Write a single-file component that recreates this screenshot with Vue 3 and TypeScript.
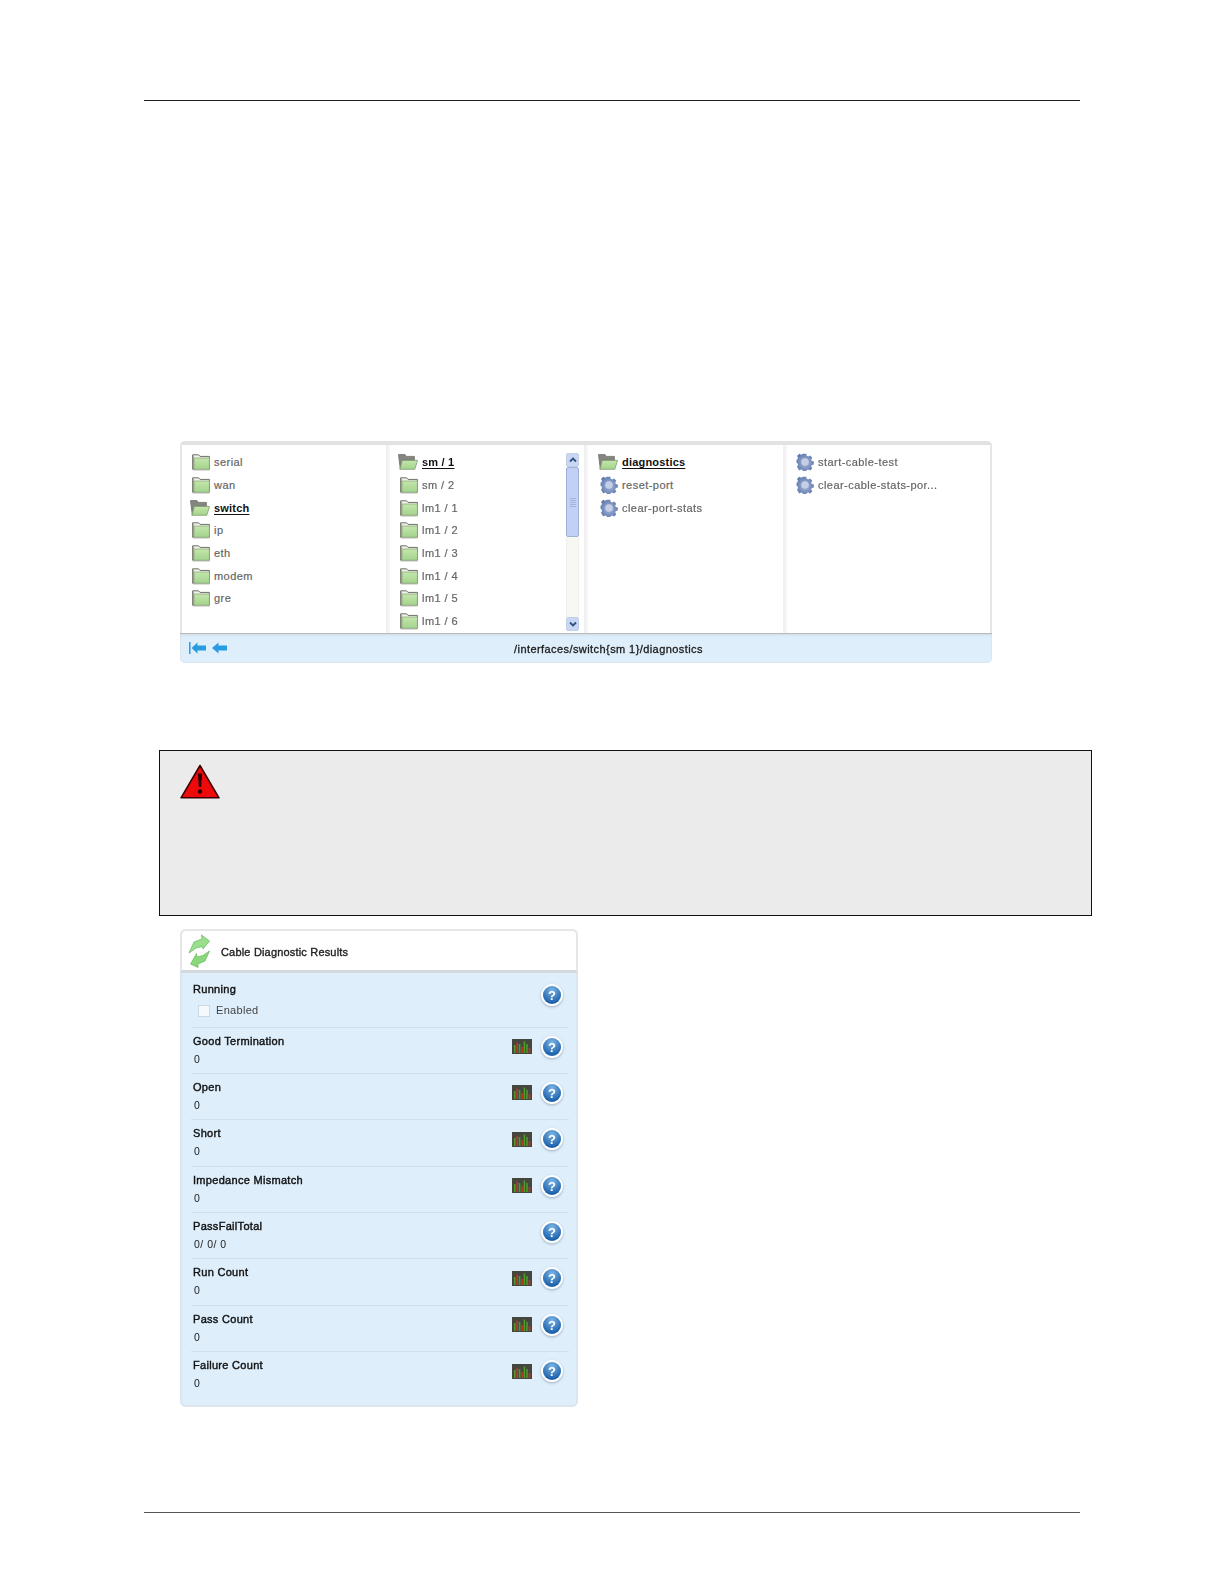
<script setup lang="ts">
interface Item { label: string; kind: 'folder' | 'open' | 'gear'; active?: boolean }
const f = (label: string): Item => ({ label, kind: 'folder' })
const o = (label: string): Item => ({ label, kind: 'open', active: true })
const g = (label: string): Item => ({ label, kind: 'gear' })
const columns: { cls: string; items: Item[] }[] = [
  { cls: 'c1', items: [f('serial'), f('wan'), o('switch'), f('ip'), f('eth'), f('modem'), f('gre')] },
  { cls: 'c2', items: [o('sm / 1'), f('sm / 2'), f('lm1 / 1'), f('lm1 / 2'), f('lm1 / 3'), f('lm1 / 4'), f('lm1 / 5'), f('lm1 / 6')] },
  { cls: 'c3', items: [o('diagnostics'), g('reset-port'), g('clear-port-stats')] },
  { cls: 'c4', items: [g('start-cable-test'), g('clear-cable-stats-por...')] }
]
const rows = [
  { label: 'Good Termination', value: '0', chart: true },
  { label: 'Open', value: '0', chart: true },
  { label: 'Short', value: '0', chart: true },
  { label: 'Impedance Mismatch', value: '0', chart: true },
  { label: 'PassFailTotal', value: '0/ 0/ 0', chart: false },
  { label: 'Run Count', value: '0', chart: true },
  { label: 'Pass Count', value: '0', chart: true },
  { label: 'Failure Count', value: '0', chart: true }
]
</script>

<template>
  <div class="page">
    <svg class="defs" aria-hidden="true">
      <defs>
        <linearGradient id="gf" x1="0" y1="0" x2="0" y2="1">
          <stop offset="0" stop-color="#c4e6ac" />
          <stop offset="1" stop-color="#a3d48c" />
        </linearGradient>
        <radialGradient id="gg" cx=".5" cy=".5" r=".55">
          <stop offset="0" stop-color="#aab9dc" />
          <stop offset="1" stop-color="#5f79ae" />
        </radialGradient>
        <symbol id="folder" viewBox="0 0 18 18">
          <path d="M.6 1.800h6l1.400 1.600h9.400v12.800H.6z" fill="#eef0ea" stroke="#6f7168" stroke-width="1" />
          <path d="M2.200 5h15.200v11.200H2.200z" fill="url(#gf)" stroke="#86a678" stroke-width=".7" />
          <path d="M.9 2.600v13.600" stroke="#85877a" stroke-width="1.600" />
          <path d="M1 17h16.600" stroke="#b9bdb2" stroke-width="1" />
        </symbol>
        <symbol id="open" viewBox="0 0 20 18">
          <path d="M.5 1.600h6.500l1.400 1.800h8v4H3.500l-1.200 8.800z" fill="#85867f" stroke="#6e6f69" stroke-width=".8" />
          <path d="M4.400 7.400h15.200l-2.800 8.900H1.900z" fill="url(#gf)" stroke="#7f9c72" stroke-width=".8" />
        </symbol>
        <symbol id="gear" viewBox="0 0 18 18">
          <path d="M7.200.4h3.600l.5 2.300 1.700.8 2-1.200 2.500 2.500-1.200 2 .7 1.700 2.200.6v3.300l-2.200.6-.7 1.700 1.200 2-2.500 2.300-2-1.100-1.700.7-.5 2.100H7.200l-.5-2.100-1.700-.7-2 1.100L.5 14.800l1.200-2-.7-1.700-1-.6V7.200l1-.6.7-1.700-1.200-2L3 .4l2 1.200 1.700-.8z" transform="scale(.9) translate(.6 .4)" fill="url(#gg)" />
          <circle cx="9" cy="9" r="3.800" fill="#c5cee4" />
        </symbol>
        <symbol id="chart" viewBox="0 0 20 15">
          <rect width="20" height="15" fill="#45473f" />
          <path d="M2.800 14V6M7.600 14V5M12.400 14V2.500M15 14V5" stroke="#4f9a2b" stroke-width="1.600" />
          <path d="M5.200 14V3.500M10 14V8M17.500 14V9" stroke="#c9351a" stroke-width="1.600" />
        </symbol>
      </defs>
    </svg>

    <div class="rule"></div>

    <section class="browser">
      <div class="cols">
        <div v-for="col in columns" :key="col.cls" class="col" :class="col.cls">
          <div v-for="it in col.items" :key="it.label" class="item" :class="{ active: it.active }">
            <svg class="ic" :class="it.kind" :viewBox="it.kind === 'open' ? '0 0 20 18' : '0 0 18 18'"><use :href="'#' + it.kind" /></svg>
            <span>{{ it.label }}</span>
          </div>
          <div v-if="col.cls === 'c2'" class="scroll">
            <div class="sbtn"><svg viewBox="0 0 12 12"><path d="M3 7.500 6 4.500l3 3" fill="none" stroke="#33507f" stroke-width="1.800" /></svg></div>
            <div class="thumb"><i></i><i></i><i></i><i></i><i></i></div>
            <div class="track"></div>
            <div class="sbtn"><svg viewBox="0 0 12 12"><path d="M3 4.500 6 7.500l3-3" fill="none" stroke="#33507f" stroke-width="1.800" /></svg></div>
          </div>
        </div>
      </div>
      <div class="foot">
        <div class="arrows">
          <svg class="a1" viewBox="0 0 17 12"><path d="M.8 0v12" stroke="#2a9be0" stroke-width="1.500" /><path d="M2.500 6 8.500.5v3H17v5H8.500v3z" fill="#2a9be0" /></svg>
          <svg class="a2" viewBox="0 0 15 12"><path d="M0 6 6.500.5v3H15v5H6.500v3z" fill="#2a9be0" /></svg>
        </div>
        <span class="path">/interfaces/switch{sm 1}/diagnostics</span>
      </div>
    </section>

    <section class="warn">
      <svg class="tri" viewBox="0 0 40 35">
        <path d="M20 1.500 39 33.800H1z" fill="#ee0a0a" stroke="#3a0000" stroke-width="1.500" stroke-linejoin="round" />
        <path d="M17.800 9.500h4.400l-1 13.500h-2.400z" fill="#2a0000" />
        <circle cx="20" cy="27.500" r="2.200" fill="#2a0000" />
      </svg>
    </section>

    <section class="results">
      <header class="rhead">
        <svg class="sync" viewBox="0 0 24 34">
          <path d="M22.500 7 14.500 1 15 5 7 8 2 19 9 14 15.500 12.500 16 15z" fill="#9bdf8c" stroke="#63b85c" stroke-width=".7" stroke-linejoin="round" />
          <path d="M3.500 30 11 33.500 11 30 18 27 22.500 17 16 21.500 10 23 9.500 19.500z" fill="#8ad77c" stroke="#63b85c" stroke-width=".7" stroke-linejoin="round" />
        </svg>
        <span>Cable Diagnostic Results</span>
      </header>
      <div class="rbody">
        <div class="row first">
          <div class="txt">
            <div class="lab">Running</div>
            <label class="chk"><i></i>Enabled</label>
          </div>
          <div class="tools">
            <span class="help"><svg viewBox="0 0 18 18"><text x="9" y="14" text-anchor="middle">?</text></svg></span>
          </div>
        </div>
        <div v-for="r in rows" :key="r.label" class="row">
          <div class="txt">
            <div class="lab">{{ r.label }}</div>
            <div class="val">{{ r.value }}</div>
          </div>
          <div class="tools">
            <svg v-if="r.chart" class="chart" viewBox="0 0 20 15"><use href="#chart" /></svg>
            <span class="help"><svg viewBox="0 0 18 18"><text x="9" y="14" text-anchor="middle">?</text></svg></span>
          </div>
        </div>
      </div>
    </section>

    <div class="rule bottom"></div>
  </div>
</template>

<style scoped>
.page {
  width: 1224px;
  height: 1584px;
  padding-top: 100px;
  box-sizing: border-box;
  background: #fff;
  overflow: hidden;
  font-family: "Liberation Sans", Arial, sans-serif;
  font-size: 11px;
}
.defs { display: block; width: 0; height: 0; }
.rule { height: 1px; background: #222; margin: 0 144px; }
.rule.bottom { margin-top: 105px; background: #555; }

.browser {
  width: 812px;
  height: 222px;
  margin: 340px 0 0 180px;
  display: flex;
  flex-direction: column;
  border-radius: 5px;
  overflow: hidden;
  background: #deeefb;
  box-shadow: inset 0 0 0 1px #dbe6ef;
  filter: blur(.35px);
}
.cols {
  height: 193px;
  box-sizing: border-box;
  display: grid;
  grid-template-columns: 208px 198px 199px 207px;
  border-top: 4px solid #e2e2e2;
  border-bottom: 1px solid #b9b9b9;
  background: #fff;
  flex: none;
}
.col {
  display: flex;
  flex-direction: column;
  padding-top: 6px;
  box-sizing: border-box;
  border-right: 2px solid #f0f0f0;
  border-left: 2px solid #f6f6f6;
  min-width: 0;
}
.col:last-child { border-right: 2px solid #e6e6e6; }
.c1 { padding-left: 10px; border-left: 2px solid #e6e6e6; }
.c2 { padding-left: 10px; position: relative; }
.c3 { padding-left: 12px; }
.c4 { padding-left: 9px; }
.item {
  height: 22.650px;
  display: flex;
  align-items: center;
  gap: 4px;
  color: #666;
  letter-spacing: .45px;
  flex: none;
  white-space: nowrap;
  -webkit-text-stroke: .2px #666;
}
.item.active { color: #111; font-weight: 700; letter-spacing: .2px; -webkit-text-stroke: 0; }
.item.active span { text-decoration: underline; text-underline-offset: 2px; }
.ic { width: 18px; height: 18px; flex: none; }
.ic.open { width: 20px; margin-left: -2px; }
.scroll {
  position: absolute;
  top: 8px;
  right: 5px;
  bottom: 2px;
  width: 13px;
  display: flex;
  flex-direction: column;
}
.sbtn {
  height: 14px;
  flex: none;
  background: #c9d7f6;
  border: 1px solid #c4cfe4;
  border-radius: 2px;
  box-sizing: border-box;
}
.sbtn svg { display: block; width: 12px; height: 12px; }
.thumb {
  height: 70px;
  flex: none;
  background: #c2d0f6;
  border: 1px solid #9fb1d8;
  border-radius: 2px;
  box-sizing: border-box;
  display: flex;
  flex-direction: column;
  align-items: center;
  justify-content: center;
  gap: 1px;
}
.thumb i { width: 6px; height: 1px; background: #a4b4da; }
.track { flex: 1; background: #f7f7f4; border: 1px solid #efefec; border-width: 0 1px; }

.foot {
  flex: 1;
  position: relative;
  display: flex;
  align-items: center;
  justify-content: center;
  padding-left: 45px;
  box-shadow: inset 0 3px 3px -2px #cfd9e2;
}
.arrows {
  position: absolute;
  left: 9px;
  top: 8px;
  display: flex;
  gap: 6px;
}
.arrows svg { display: block; height: 12px; }
.arrows .a1 { width: 17px; }
.arrows .a2 { width: 15px; }
.path { color: #1c1c1c; letter-spacing: .42px; -webkit-text-stroke: .3px #1c1c1c; }

.warn {
  width: 933px;
  height: 166px;
  margin: 87px 0 0 159px;
  box-sizing: border-box;
  border: 1.500px solid #111;
  background: #ebebeb;
  padding: 13px 0 0 20px;
}
.tri { display: block; width: 40px; height: 35px; }

.results {
  width: 398px;
  height: 478px;
  margin: 13px 0 0 180px;
  display: flex;
  flex-direction: column;
  border-radius: 6px;
  overflow: hidden;
  background: #deeefb;
  box-shadow: inset 0 0 0 2px #dbe5ee;
  filter: blur(.35px);
}
.rhead {
  height: 44px;
  flex: none;
  display: flex;
  align-items: center;
  gap: 10px;
  padding: 3px 0 0 7px;
  box-sizing: border-box;
  background: #fff;
  border: 2px solid #e6e6e6;
  border-bottom: 3px solid #d4d8dc;
  border-radius: 6px 6px 0 0;
  color: #222;
  letter-spacing: .18px;
  -webkit-text-stroke: .35px #222;
}
.sync { width: 24px; height: 34px; margin: -3px 0 0 -2px; flex: none; }
.rbody { padding: 0 9px 0 11px; }
.row {
  height: 46.400px;
  display: flex;
  align-items: flex-start;
  justify-content: space-between;
  box-sizing: border-box;
  border-bottom: 1px solid #cfe0ee;
  padding: 6px 0 0 2px;
}
.row.first { height: 54.500px; padding-top: 9px; }
.row:last-child { border-bottom: 0; }
.lab { color: #111; letter-spacing: .3px; line-height: 14px; -webkit-text-stroke: .4px #111; }
.val { margin-top: 5px; color: #222; font-size: 10.500px; line-height: 13px; padding-left: 1px; letter-spacing: .5px; }
.chk {
  display: flex;
  align-items: center;
  gap: 6px;
  margin: 8px 0 0 5px;
  color: #444;
  letter-spacing: .3px;
  line-height: 13px;
}
.chk i {
  width: 10px;
  height: 10px;
  background: #f6f9fc;
  border: 1px solid #cbd8e2;
  display: block;
}
.tools {
  display: flex;
  align-items: center;
  gap: 11px;
  margin-top: 4px;
  padding-right: 8px;
}
.first .tools { margin-top: 4px; }
.chart { display: block; width: 20px; height: 15px; }
.help {
  display: block;
  width: 18px;
  height: 18px;
  border-radius: 50%;
  background: radial-gradient(circle at 50% 25%, #7db5e6, #1c62ac 75%);
  box-shadow: 0 0 0 2px #fff, 0 1px 2px 2.500px #b4c4d2;
}
.help svg { display: block; width: 18px; height: 18px; }
.help text { font: 700 13px "Liberation Sans", Arial, sans-serif; fill: #fff; }
</style>
